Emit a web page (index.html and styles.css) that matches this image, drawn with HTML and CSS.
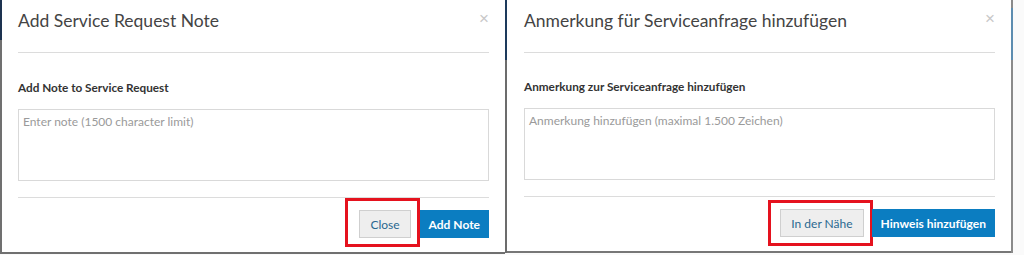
FILE: index.html
```html
<!DOCTYPE html>
<html lang="en">
  <head>
    <meta charset="UTF-8" />
    <meta name="viewport" content="width=device-width, initial-scale=1.0" />
    <title>Add Service Request Note</title>
    <link rel="stylesheet" href="styles.css">
  </head>
  <body>
    <div class="shot shot-left">
      <div class="dialog">
        <div class="dialog-header">
          <h2>Add Service Request Note</h2>
          <span class="close-x">&times;</span>
        </div>
        <div class="dialog-body">
          <label for="noteEn">Add Note to Service Request</label>
          <textarea id="noteEn" placeholder="Enter note (1500 character limit)"></textarea>
        </div>
        <div class="dialog-footer">
          <span class="highlight">
            <button type="button" class="btn btn-default">Close</button>
          </span>
          <button type="button" class="btn btn-primary">Add Note</button>
        </div>
      </div>
    </div>

    <div class="shot shot-right">
      <div class="dialog">
        <div class="dialog-header">
          <h2 lang="de">Anmerkung für Serviceanfrage hinzufügen</h2>
          <span class="close-x">&times;</span>
        </div>
        <div class="dialog-body">
          <label for="noteDe" lang="de">Anmerkung zur Serviceanfrage hinzufügen</label>
          <textarea id="noteDe" placeholder="Anmerkung hinzufügen (maximal 1.500 Zeichen)"></textarea>
        </div>
        <div class="dialog-footer">
          <span class="highlight">
            <button type="button" class="btn btn-default" lang="de">In der Nähe</button>
          </span>
          <button type="button" class="btn btn-primary" lang="de">Hinweis hinzufügen</button>
        </div>
      </div>
    </div>
  </body>
</html>
```

FILE: styles.css
```css
body {
  font-family: "Lato", "Open Sans", sans-serif;
  background-color: #fafafa;
  margin: 0;
  display: flex;
  align-items: flex-start;
  height: 255px;
  overflow: hidden;
}

/* screenshot frames */
.shot {
  padding: 0 0 2px 2px;
}

.shot-left {
  width: 503px;
  background: linear-gradient(to bottom, #1d3350 0, #1d3350 40px, #707070 40px);
}

.shot-right {
  width: 504px;
  padding-right: 2px;
  background:
    linear-gradient(to bottom, #1d3a5c 0, #1d3a5c 60px, #6c6c6c 60px) left top / 2px 100% no-repeat,
    linear-gradient(to bottom, #8a8a8a 0, #8a8a8a 8px, #5d8db0 8px, #5d8db0 60px, #8a8a8a 60px) right top / 2px 100% no-repeat,
    #777;
}

.dialog {
  background-color: #fff;
  padding: 0 16px;
  height: 252px;
  box-sizing: border-box;
}

.shot-right .dialog {
  height: 251px;
  padding-left: 17px;
}

.dialog-header {
  display: flex;
  justify-content: space-between;
  align-items: flex-start;
  height: 52px;
  border-bottom: 1px solid #dcdcdc;
}

h2 {
  margin: 8px 0 0 0;
  font-size: 17.5px;
  font-weight: normal;
  line-height: 26px;
  color: #444;
}

.close-x {
  margin: 9px 0 0 0;
  font-family: "Liberation Sans", sans-serif;
  font-size: 17px;
  line-height: 20px;
  color: #c8c8c8;
}

.dialog-body {
  padding-top: 26px;
  padding-bottom: 16px;
}

.shot-right .dialog-body {
  padding-top: 25px;
}

label {
  display: block;
  margin-bottom: 12px;
  font-size: 11.75px;
  font-weight: bold;
  line-height: 18px;
  color: #333;
}

textarea {
  display: block;
  width: 100%;
  height: 72px;
  box-sizing: border-box;
  padding: 4px 4px;
  border: 1px solid #d9d9d9;
  resize: none;
  font-family: "Lato", "Open Sans", sans-serif;
  font-size: 12px;
}

textarea::placeholder {
  color: #9a9a9a;
}

.dialog-footer {
  display: flex;
  justify-content: flex-end;
  align-items: flex-start;
  border-top: 1px solid #dcdcdc;
  padding-top: 12px;
}

.btn {
  height: 28px;
  padding: 0 10px;
  border: 1px solid transparent;
  border-radius: 0;
  font-family: "Lato", "Open Sans", sans-serif;
  font-size: 12px;
  font-weight: bold;
  cursor: pointer;
}

.btn-default {
  background-color: #eeeeee;
  border-color: #cfcfcf;
  color: #2a6890;
  font-weight: normal;
}

.btn-primary {
  padding: 0 8px;
  background-color: #0b7dc1;
  color: #fff;
}

/* red annotation box round the close button */
.highlight {
  display: block;
  margin: -12px 0 -9px 0;
  padding: 9px 6px 6px 11px;
  border: 3px solid #e5121e;
}

.shot-right .highlight {
  margin: -9px -1px -9px 0;
  padding: 6px 6px 6px 9px;
}

.highlight .btn {
  display: block;
}
```
